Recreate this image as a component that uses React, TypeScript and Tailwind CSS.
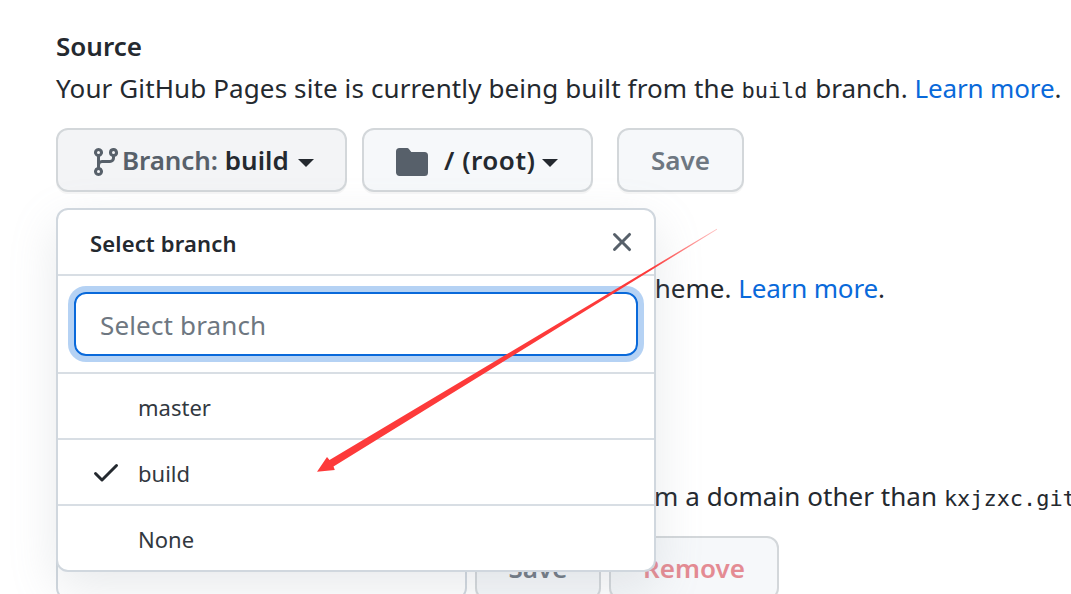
import type { ReactNode } from "react";

function GitBranchIcon() {
  return (
    <svg viewBox="0 0 16 16" className="mt-1 size-8 shrink-0 fill-[#57606a]">
      <path
        fillRule="evenodd"
        d="M11.75 2.5a.75.75 0 100 1.5.75.75 0 000-1.5zm-2.25.75a2.25 2.25 0 113 2.122V6A2.5 2.5 0 0110 8.5H6a1 1 0 00-1 1v1.128a2.251 2.251 0 11-1.5 0V5.372a2.25 2.25 0 111.5 0v1.836A2.492 2.492 0 016 7h4a1 1 0 001-1v-.628A2.25 2.25 0 019.5 3.25zM4.25 12a.75.75 0 100 1.5.75.75 0 000-1.5zM3.5 3.25a.75.75 0 111.5 0 .75.75 0 01-1.5 0z"
      />
    </svg>
  );
}

function FolderIcon() {
  return (
    <svg viewBox="0 0 16 16" className="mt-1 size-8 shrink-0 fill-[#57606a]">
      <path d="M1.75 1A1.75 1.75 0 000 2.75v10.5C0 14.216.784 15 1.75 15h12.5A1.75 1.75 0 0016 13.25v-8.5A1.75 1.75 0 0014.25 3h-6.5a.25.25 0 01-.2-.1l-.9-1.2c-.33-.44-.85-.7-1.4-.7h-3.5z" />
    </svg>
  );
}

function CheckIcon() {
  return (
    <svg viewBox="0 0 16 16" className="size-8 shrink-0 fill-[#24292f]">
      <path
        fillRule="evenodd"
        d="M13.78 4.22a.75.75 0 010 1.06l-7.25 7.25a.75.75 0 01-1.06 0L2.22 9.28a.75.75 0 011.06-1.06L6 10.94l6.72-6.72a.75.75 0 011.06 0z"
      />
    </svg>
  );
}

function CloseIcon() {
  return (
    <svg viewBox="0 0 16 16" className="size-8 shrink-0 fill-[#57606a]">
      <path
        fillRule="evenodd"
        d="M3.72 3.72a.75.75 0 011.06 0L8 6.94l3.22-3.22a.75.75 0 111.06 1.06L9.06 8l3.22 3.22a.75.75 0 11-1.06 1.06L8 9.06l-3.22 3.22a.75.75 0 01-1.06-1.06L6.94 8 3.72 4.78a.75.75 0 010-1.06z"
      />
    </svg>
  );
}

function Caret() {
  return <span className="mt-1.5 size-0 border-x-8 border-t-8 border-x-transparent border-t-[#24292f]" />;
}

function Button({ className, children }: { className: string; children: ReactNode }) {
  return (
    <button
      className={`flex h-16 shrink-0 items-center rounded-xl border-2 border-[#d3d7da] font-semibold shadow-[0_2px_0_rgba(27,31,36,0.04)] ${className}`}
    >
      {children}
    </button>
  );
}

function Mono({ children }: { children: ReactNode }) {
  return (
    <code className="font-['DejaVu_Sans_Mono',monospace] text-[22px] leading-none tracking-[-0.06px]">{children}</code>
  );
}

function Link({ children }: { children: ReactNode }) {
  return (
    <a href="#" className="tracking-[-0.15px] text-[#0969da]">
      {children}
    </a>
  );
}

function BranchOption({ name, selected }: { name: string; selected?: boolean }) {
  return (
    <li className="flex h-[66px] items-center border-t-2 border-[#d8dee4] pl-8 text-[22px] text-[#32383f]">
      <span className="w-12">{selected && <CheckIcon />}</span>
      <span className="pt-px">{name}</span>
    </li>
  );
}

function BranchMenu() {
  return (
    <div className="absolute top-[208px] left-14 w-[600px] rounded-xl border-2 border-[#d0d7de] bg-white shadow-[0_16px_48px_rgba(140,149,159,0.2)]">
      <div className="flex h-16 items-center justify-between pr-4 pl-8">
        <span className="pt-px text-[22px] font-semibold tracking-[0.15px]">Select branch</span>
        <CloseIcon />
      </div>
      <div className="border-t-2 border-[#d8dee4] p-4">
        <input
          placeholder="Select branch"
          className="block h-16 w-full rounded-xl border-2 border-[#0969da] px-6 pt-px text-[26px] tracking-[0.15px] ring-6 ring-[#0969da]/30 outline-none placeholder:text-[#6e7781]"
        />
      </div>
      <ul>
        <BranchOption name="master" />
        <BranchOption name="build" selected />
        <BranchOption name="None" />
      </ul>
    </div>
  );
}

function Arrow() {
  return (
    <svg viewBox="0 0 1071 594" className="pointer-events-none absolute inset-0 h-[594px] w-[1071px]">
      <defs>
        <linearGradient id="arrow" gradientUnits="userSpaceOnUse" x1="717" y1="229" x2="650" y2="269">
          <stop offset="0" stopColor="#fd3a3a" stopOpacity="0.3" />
          <stop offset="1" stopColor="#fd3a3a" />
        </linearGradient>
      </defs>
      <path fill="url(#arrow)" d="M317 471.7 327 457 329.5 460 716.8 228.8 717.2 229.4 333.5 466.5 334.8 470Z" />
    </svg>
  );
}

export default function App() {
  return (
    <main className="relative h-[594px] w-[1071px] overflow-hidden bg-white pt-[25px] pl-14 font-['Noto_Sans','Open_Sans',sans-serif] text-[26px] leading-[42px] whitespace-nowrap text-[#24292f]">
      <h2 className="font-semibold">Source</h2>
      <p className="h-[42px] tracking-[0.115px]">
        Your GitHub Pages site is currently being built from the <Mono>build</Mono>{" "}
        <span className="ml-px tracking-normal">branch.</span> <Link>Learn more</Link>.
      </p>
      <div className="mt-[19px] flex">
        <Button className="w-[291px] bg-[#f3f4f6] pl-8">
          <GitBranchIcon />
          <span className="tracking-[-0.1px] text-[#57606a]">Branch:</span>
          <span className="mr-[9px] ml-[7px]">build</span>
          <Caret />
        </Button>
        <Button className="ml-[15px] w-[231px] bg-[#f6f8fa] pl-8">
          <FolderIcon />
          <span className="mr-[7px] ml-4 tracking-[0.5px]">/ (root)</span>
          <Caret />
        </Button>
        <Button className="ml-6 w-[127px] justify-center bg-[#f6f8fa] text-[#6e7781]">Save</Button>
      </div>
      <p className="mt-[75px] flex h-[42px] w-[829px] justify-end">
        theme.&nbsp;<Link>Learn more</Link>.
      </p>
      <p className="mt-[166px] h-[42px] pl-[563px] tracking-[0.05px]">
        from a domain other than <Mono>kxjzxc.github.io</Mono>
      </p>
      <div className="mt-[19px] flex gap-2">
        <input className="h-16 w-[411px] shrink-0 rounded-xl border-2 border-[#d0d7de]" />
        <Button className="w-[126px] justify-center bg-[#f6f8fa] text-[#6e7781]">Save</Button>
        <Button className="w-[170px] justify-center bg-[#f6f8fa] text-[#e48b93]">Remove</Button>
      </div>
      <BranchMenu />
      <Arrow />
    </main>
  );
}
